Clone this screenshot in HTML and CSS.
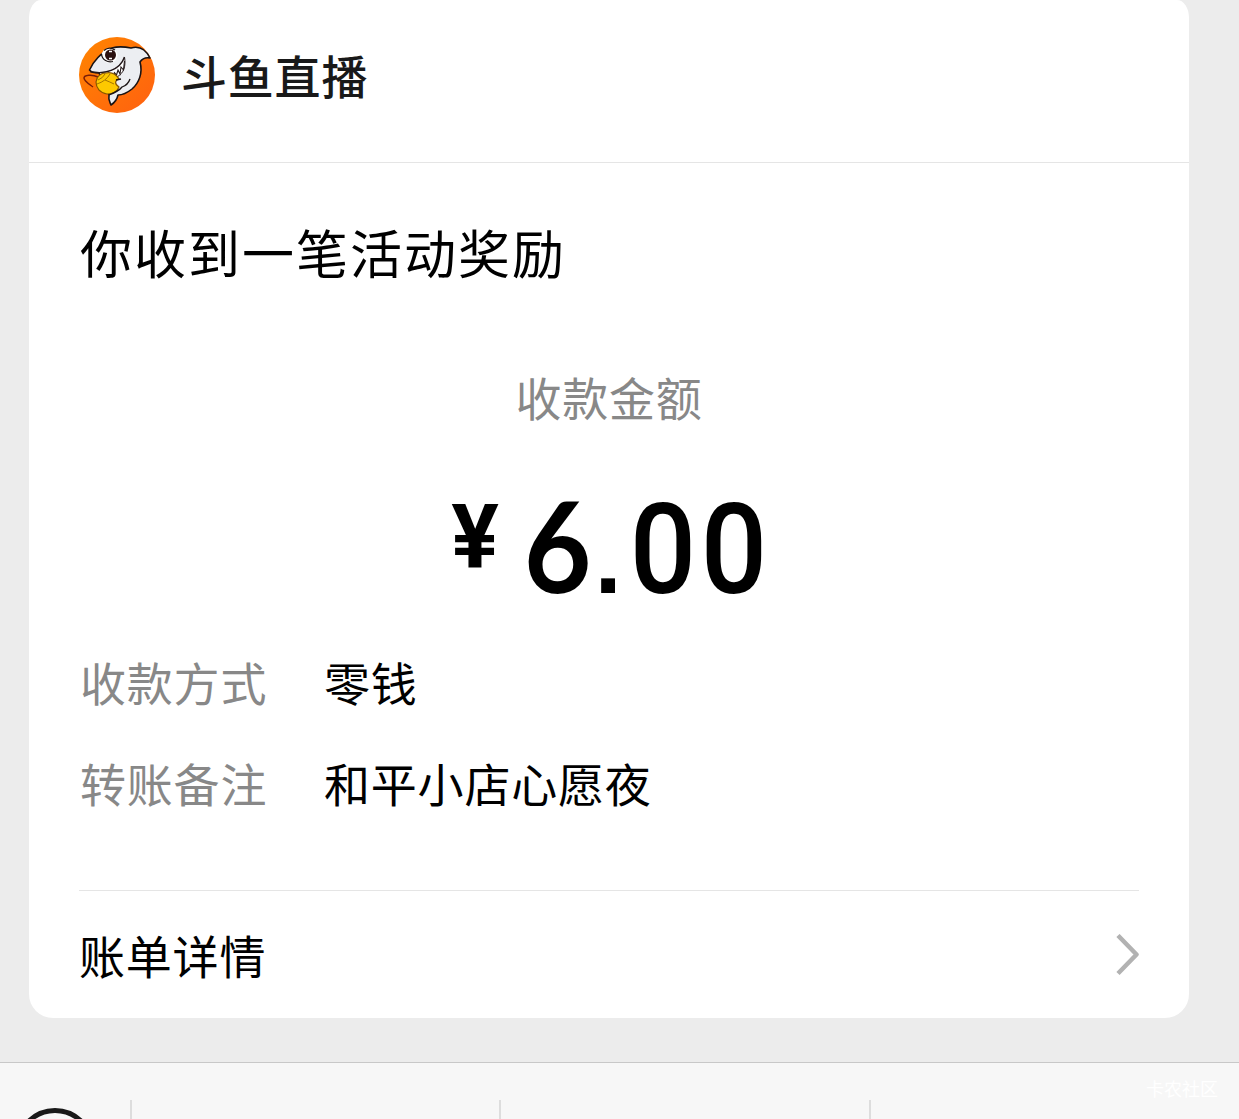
FILE: index.html
```html
<!DOCTYPE html>
<html lang="zh-CN">
<head>
    <meta charset="UTF-8">
    <meta name="viewport" content="width=device-width, initial-scale=1.0">
    <title>斗鱼直播</title>
    <link rel="stylesheet" href="styles.css">
</head>
<body>
    <div class="chat">
        <div class="card">
            <div class="card-header">
                <svg class="avatar" viewBox="0 0 76 76">
                    <defs>
                        <linearGradient id="orange" x1="0" y1="0" x2="1" y2="1">
                            <stop offset="0" stop-color="#ff8500"/>
                            <stop offset="1" stop-color="#ff6010"/>
                        </linearGradient>
                    </defs>
                    <circle cx="38" cy="38" r="38" fill="url(#orange)"/>
                    <path d="M10.5 33C14 25 22 15 33 11C40 9 47 10 52 11C59 9 66 11 71 21C66 20 63 22 61 25C64 36 60 46 53 52C48 56 42 58 39 58C38 63 35 66 32 68C31 65 29 63 30 58L24 44L20 36C16 36 12 35 10.5 33Z" fill="#eceef2" stroke="#191314" stroke-width="1.6" stroke-linejoin="round"/>
                    <path d="M11 34.500C24 37 40 34 45.500 20C47 29 45 36 38 40L35 36" fill="#fff" stroke="#24191b" stroke-width="1"/>
                    <path d="M11 34.500C24 37 40 34 45.500 20C30 30 24 33 11 34.500Z" fill="#eceef2"/>
                    <path d="M11 34.500C26 38 41 33 45.500 20" fill="none" stroke="#24191b" stroke-width="1.400"/>
                    <path d="M35 35L37.500 38L39 33L41 37L42 30L44.500 33L45.500 24" fill="none" stroke="#24191b" stroke-width="1.100"/>
                    <ellipse cx="30.500" cy="18.500" rx="8" ry="7.5" fill="#fff"/>
                    <circle cx="31.500" cy="18" r="5.500" fill="#2a1110"/>
                    <path d="M30 14.500H33M30 21.500H33" fill="none" stroke="#fff" stroke-width="1.500"/>
                    <path d="M22.500 17C23 23 29 26 34 24.500M25 13.500Q30 9 36 13" fill="none" stroke="#191314" stroke-width="1.3"/>
                    <path d="M19 40C13 37 5 38 5 41C5 44 10 47 14 50" fill="none" stroke="#781d08" stroke-width="1.5"/>
                    <path d="M27 36C32 35 37 37 40 42C36 43 35 47 40 50C38 55 34 57 28 57C21 56 17 51 17 45C18 39 22 36 27 36Z" fill="#fdc900" stroke="#8a5800" stroke-width="1.2"/>
                    <path d="M26 37Q24 41 19 43M31 37Q27 44 18 47M26 43Q31 45 35 47" fill="none" stroke="#a37400"/>
                    <path d="M30 58C35 56 40 54 43 50Q49 48 51 42M37 43L42 42" fill="none" stroke="#191314" stroke-width="1.3"/>
                </svg>
                <span class="name">斗鱼直播</span>
            </div>
            <div class="card-body">
                <h1 class="title">你收到一笔活动奖励</h1>
                <div class="amount-label">收款金额</div>
                <div class="amount">
                    <span class="currency">¥</span>
                    <div class="number">
                        <span class="digit six">6</span><span class="dot">.</span><span class="digit">0</span><span class="digit">0</span>
                    </div>
                </div>
                <div class="row">
                    <span class="label">收款方式</span>
                    <span class="value">零钱</span>
                </div>
                <div class="row">
                    <span class="label">转账备注</span>
                    <span class="value">和平小店心愿夜</span>
                </div>
            </div>
            <div class="card-footer">
                <span>账单详情</span>
                <svg class="arrow" viewBox="0 0 24 42">
                    <path d="M3 1.500L21.500 20.500L3 39.500" fill="none" stroke="#b2b2b2" stroke-width="4.500" stroke-linejoin="round"/>
                </svg>
            </div>
        </div>
    </div>
    <div class="toolbar">
        <div class="keyboard">
            <svg viewBox="0 0 80 80">
                <circle cx="40" cy="40" r="37.5" fill="none" stroke="#191919" stroke-width="5"/>
            </svg>
        </div>
        <div class="menu"></div>
        <div class="menu"></div>
        <div class="menu"></div>
        <span class="watermark">卡农社区</span>
    </div>
</body>
</html>
```

FILE: styles.css
```css
* {
    box-sizing: border-box;
}

body {
    margin: 0;
    height: 1119px;
    overflow: hidden;
    background-color: #ececec;
    color: #000;
    font-family: "Noto Sans CJK SC", sans-serif;
    font-size: 46px;
    line-height: 60px;
    letter-spacing: 0.8px;
}

.chat {
    height: 1062px;
    padding: 0 50px 44px 29px;
}

.card {
    height: 1018px;
    background-color: #fff;
    border-radius: 12px 12px 24px 24px / 18px 18px 24px 24px;
}

.card-header {
    display: flex;
    align-items: center;
    height: 163px;
    padding: 0 50px 12px;
    border-bottom: 1px solid #e5e5e5;
}

.avatar {
    width: 76px;
    height: 76px;
    margin-right: 26px;
}

.name {
    padding-bottom: 2px;
    font-weight: 500;
    color: #191919;
}

.card-body {
    height: 727px;
    padding: 53px 51px 0;
}

.title {
    margin: 0;
    font-size: 52px;
    font-weight: 400;
    line-height: 71px;
    letter-spacing: 2px;
}

.amount-label {
    margin-top: 79px;
    text-align: center;
    color: #888;
}

.amount {
    display: flex;
    justify-content: center;
    height: 130px;
    margin-top: 54px;
    font-family: Roboto, sans-serif;
    letter-spacing: 0;
}

.currency {
    width: 52px;
    margin-right: 20px;
    text-align: center;
    font-size: 89px;
    font-weight: 700;
    line-height: 114px;
}

.number {
    display: flex;
    align-items: baseline;
    font-size: 127px;
    font-weight: 500;
    line-height: 128px;
}

.digit {
    width: 71px;
    text-align: center;
    transform: scaleX(0.92);
}

.six {
    width: 68px;
    font-family: Lato, sans-serif;
    font-weight: 700;
}

.dot {
    width: 38px;
    text-align: center;
    font-family: "Liberation Sans", Arial, sans-serif;
    font-size: 98px;
    font-weight: 700;
}

.row {
    display: flex;
    margin-top: 41px;
}

.label {
    width: 244px;
    color: #888;
}

.card-footer {
    display: flex;
    justify-content: space-between;
    align-items: center;
    height: 128px;
    margin: 0 50px;
    border-top: 1px solid #e5e5e5;
}

.card-footer span {
    padding-bottom: 2px;
}

.arrow {
    width: 24px;
    height: 42px;
}

.toolbar {
    position: relative;
    display: grid;
    grid-template-columns: 130px 369px 370px 1fr;
    height: 57px;
    overflow: hidden;
    background-color: #f7f7f7;
    border-top: 1px solid #c8c8c8;
}

.keyboard {
    padding: 45px 0 0 15px;
}

.keyboard svg {
    display: block;
    width: 80px;
    height: 80px;
}

.menu {
    margin-top: 37px;
    border-left: 2px solid #ddd;
}

.watermark {
    position: absolute;
    right: 21px;
    top: 12px;
    color: #fff;
    font-size: 18px;
    line-height: 26px;
    letter-spacing: 0;
}
```
